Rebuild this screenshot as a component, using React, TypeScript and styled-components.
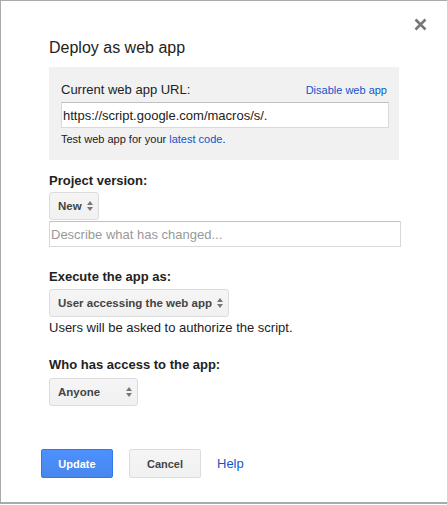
import React from 'react';
import styled, { createGlobalStyle } from 'styled-components';

const GlobalStyle = createGlobalStyle`
  html, body {
    margin: 0;
    padding: 0;
    background: #fff;
  }
  body {
    font-family: "Liberation Sans", Arial, sans-serif;
    color: #222;
  }
`;

const Dialog = styled.div`
  position: relative;
  box-sizing: border-box;
  height: 504px;
  border-top: 1px solid #aaa;
  border-left: 1px solid #aaa;
  border-bottom: 2px solid #aaa;
  display: flex;
  flex-direction: column;
`;

const CloseButton = styled.button`
  position: absolute;
  top: 17px;
  right: 20px;
  width: 13px;
  height: 13px;
  padding: 0;
  border: 0;
  background: none;
  display: flex;
  cursor: pointer;
`;

const Body = styled.div`
  padding: 37px 0 0 48px;
  display: flex;
  flex-direction: column;
  align-items: flex-start;
`;

const Title = styled.h1`
  margin: 0;
  font-size: 16px;
  line-height: 20px;
  font-weight: normal;
  color: #222;
`;

const UrlPanel = styled.div`
  box-sizing: border-box;
  width: 350px;
  margin-top: 9px;
  padding: 13px 10px 14px 12px;
  background: #f1f1f1;
`;

const PanelHeader = styled.div`
  display: flex;
  justify-content: space-between;
  align-items: baseline;
  padding-right: 2px;
  font-size: 13px;
  line-height: 20px;
`;

const Link = styled.a<{ $size?: number }>`
  color: #15c;
  text-decoration: none;
  font-size: ${(p) => p.$size ?? 11}px;
`;

const TextInput = styled.input<{ $width: number; $top: number }>`
  display: block;
  box-sizing: border-box;
  width: ${(p) => p.$width}px;
  height: 26px;
  margin: ${(p) => p.$top}px 0 0;
  padding: 0 1px;
  border: 1px solid #d9d9d9;
  border-top-color: #c0c0c0;
  border-radius: 1px;
  background: #fff;
  font-family: inherit;
  font-size: 13px;
  color: #222;
  outline: none;
  &::placeholder {
    color: #999;
  }
`;

const Note = styled.div`
  margin-top: 4px;
  font-size: 11px;
  line-height: 14px;
`;

const Label = styled.div<{ $top: number }>`
  margin-top: ${(p) => p.$top}px;
  font-size: 13px;
  line-height: 16px;
  font-weight: bold;
  color: #222;
`;

const Hint = styled.div`
  margin-top: 3px;
  font-size: 13px;
  line-height: 16px;
`;

const Select = styled.div<{ $top: number; $width?: number }>`
  box-sizing: border-box;
  display: flex;
  align-items: center;
  justify-content: space-between;
  gap: 5px;
  height: 28px;
  ${(p) => (p.$width ? `width: ${p.$width}px;` : '')}
  margin-top: ${(p) => p.$top}px;
  padding: 0 5px 0 8px;
  border: 1px solid #dcdcdc;
  border-radius: 3px;
  background: linear-gradient(#f5f5f5, #f1f1f1);
  font-size: 11.5px;
  font-weight: bold;
  color: #444;
  cursor: default;
`;

const Footer = styled.div`
  display: flex;
  align-items: center;
  gap: 16px;
  margin-top: 43px;
  padding-left: 40px;
`;

const Button = styled.button<{ $primary?: boolean }>`
  box-sizing: border-box;
  width: 72px;
  height: 29px;
  padding: 0;
  border-radius: 2px;
  border: 1px solid ${(p) => (p.$primary ? '#3079ed' : '#dcdcdc')};
  background: ${(p) =>
    p.$primary ? 'linear-gradient(#4d90fe, #4787ed)' : 'linear-gradient(#f5f5f5, #f1f1f1)'};
  color: ${(p) => (p.$primary ? '#fff' : '#444')};
  font-family: inherit;
  font-size: 11px;
  font-weight: bold;
  cursor: pointer;
`;

const Arrows = () => (
  <svg width="6" height="10" viewBox="0 0 6 10">
    <path d="M3 0 L6 4 H0 Z M3 10 L6 6 H0 Z" fill="#777" />
  </svg>
);

const App: React.FC = () => {
  return (
    <>
      <GlobalStyle />
      <Dialog>
        <CloseButton aria-label="Close">
          <svg width="13" height="13" viewBox="0 0 13 13">
            <path d="M1.5 1.5 L11.5 11.5 M11.5 1.5 L1.5 11.5" stroke="#777" strokeWidth="2.6" />
          </svg>
        </CloseButton>
        <Body>
          <Title>Deploy as web app</Title>
          <UrlPanel>
            <PanelHeader>
              <span>Current web app URL:</span>
              <Link href="#">Disable web app</Link>
            </PanelHeader>
            <TextInput $width={328} $top={2} readOnly value="https://script.google.com/macros/s/." />
            <Note>
              Test web app for your <Link href="#">latest code</Link>.
            </Note>
          </UrlPanel>

          <Label $top={13}>Project version:</Label>
          <Select $top={3}>
            New <Arrows />
          </Select>
          <TextInput $width={352} $top={1} placeholder="Describe what has changed..." />

          <Label $top={22}>Execute the app as:</Label>
          <Select $top={4}>
            User accessing the web app <Arrows />
          </Select>
          <Hint>Users will be asked to authorize the script.</Hint>

          <Label $top={21}>Who has access to the app:</Label>
          <Select $top={5} $width={89}>
            Anyone <Arrows />
          </Select>
        </Body>
        <Footer>
          <Button $primary>Update</Button>
          <Button>Cancel</Button>
          <Link href="#" $size={13}>Help</Link>
        </Footer>
      </Dialog>
    </>
  );
};

export default App;
